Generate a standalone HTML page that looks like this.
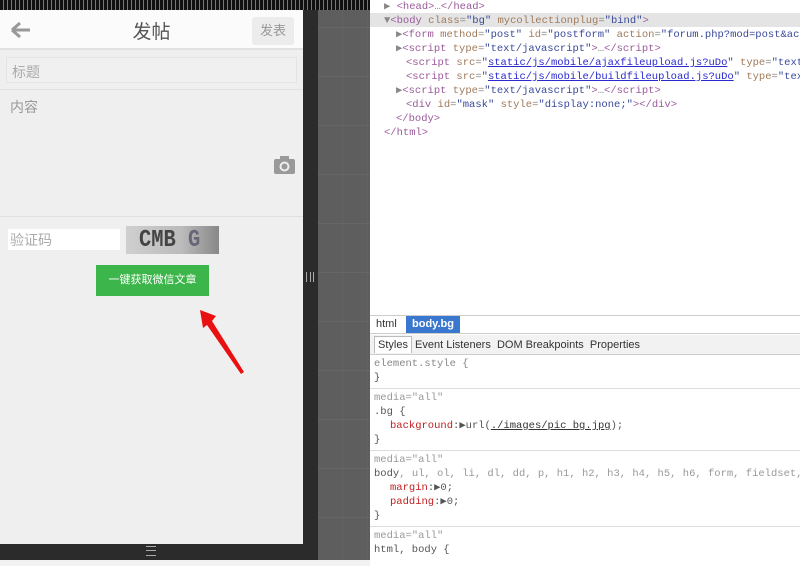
<!DOCTYPE html>
<html><head><meta charset="utf-8"><style>
*{margin:0;padding:0;box-sizing:border-box}
body{width:800px;height:566px;overflow:hidden;background:#fff;position:relative;font-family:"Liberation Sans","Noto Sans CJK SC",sans-serif}
.abs{position:absolute}
.mono{font-family:"Liberation Mono","DejaVu Sans Mono",monospace;font-size:10.5px;white-space:nowrap;color:#888}
.tag{color:#9a5a9a}.an{color:#a07a5a}.av{color:#3a4a9a}.lk{color:#2a2ad0;text-decoration:underline}
</style></head><body>
<div class="abs" style="left:0;top:0;width:370px;height:10px;background:repeating-linear-gradient(90deg,#111 0 3px,#777 3px 4px)"></div>
<div class="abs" style="left:318px;top:10px;width:52px;height:556px;background:#5e5e5e;background-image:repeating-linear-gradient(0deg,transparent 0 48px,#666 48px 49px),repeating-linear-gradient(90deg,transparent 0 24px,#626262 24px 25px)"></div>
<div class="abs" style="left:303px;top:10px;width:15px;height:550px;background:#2b2b2b"></div>
<div class="abs" style="left:0;top:544px;width:318px;height:16px;background:#2b2b2b"></div>
<div class="abs" style="left:146px;top:546px;width:10px;height:10px;border-top:1px solid #aaa;border-bottom:1px solid #aaa"><div style="margin-top:3px;border-top:1px solid #aaa"></div></div>
<div class="abs" style="left:306px;top:272px;width:8px;height:10px;border-left:1px solid #aaa;border-right:1px solid #aaa"><div style="margin-left:3px;width:1px;height:10px;background:#aaa"></div></div>
<div class="abs" style="left:0;top:560px;width:370px;height:6px;background:#f2f2f2"></div>
<div class="abs" style="left:0;top:10px;width:303px;height:534px;background:#efefef"></div>
<div class="abs" style="left:0;top:10px;width:303px;height:40px;background:#fbfbfb;border-bottom:2px solid #e2e2e2"></div>
<svg class="abs" style="left:9px;top:20px" width="24" height="20"><path d="M3 10H21M3 10L11 3M3 10L11 17" stroke="#999" stroke-width="3" fill="none"/></svg>
<div class="abs" style="left:0;top:17px;width:303px;text-align:center;font-size:19px;color:#555">发帖</div>
<div class="abs" style="left:252px;top:17px;width:42px;height:28px;background:#ececec;border-radius:3px;font-size:13px;color:#999;text-align:center;line-height:28px">发表</div>
<div class="abs" style="left:6px;top:57px;width:291px;height:26px;border:1px solid #e4e4e4;background:#f0f0f0;font-size:14px;color:#aaa;padding:4px 5px">标题</div>
<div class="abs" style="left:0;top:89px;width:303px;height:1px;background:#e2e2e2"></div>
<div class="abs" style="left:10px;top:97px;font-size:14px;color:#999">内容</div>
<svg class="abs" style="left:274px;top:156px" width="21" height="18"><rect x="0" y="3" width="21" height="15" rx="2" fill="#999"/><rect x="6" y="0" width="9" height="5" fill="#999"/><circle cx="10.5" cy="10.5" r="5" fill="#eee"/><circle cx="10.5" cy="10.5" r="3" fill="#999"/></svg>
<div class="abs" style="left:0;top:216px;width:303px;height:1px;background:#e0e0e0"></div>
<div class="abs" style="left:8px;top:229px;width:112px;height:21px;background:#fff;font-size:14px;color:#aaa;padding:1px 2px">验证码</div>
<div class="abs" style="left:126px;top:226px;width:93px;height:28px;background:linear-gradient(90deg,#cfcfcf,#bbb 60%,#888);overflow:hidden"><span style="position:absolute;left:13px;top:0;white-space:nowrap;font-family:'Liberation Mono',monospace;font-weight:bold;font-size:24px;color:#444;line-height:30px;transform:scaleX(0.85);transform-origin:left">CMB<span style="color:#667"> G</span></span></div>
<div class="abs" style="left:96px;top:265px;width:113px;height:31px;background:#3cb54a;color:#fff;font-size:11px;text-align:center;line-height:31px">一键获取微信文章</div>
<svg class="abs" style="left:190px;top:300px" width="60" height="80"><path d="M10 10L26 16L22 21L54 72L51 74L17 25L13 28Z" fill="#e81010"/></svg>
<div class="abs" style="left:370px;top:0;width:430px;height:316px;background:#fff"></div>
<div class="abs" style="left:370px;top:13px;width:430px;height:14px;background:#e4e4e4"></div>
<div class="abs mono" style="left:384px;top:0;line-height:14px">
<div>▶ <span class="tag">&lt;head&gt;</span>…<span class="tag">&lt;/head&gt;</span></div>
<div>▼<span class="tag">&lt;body</span> <span class="an">class</span>=<span class="av">"bg"</span> <span class="an">mycollectionplug</span>=<span class="av">"bind"</span><span class="tag">&gt;</span></div>
<div style="padding-left:12px">▶<span class="tag">&lt;form</span> <span class="an">method</span>=<span class="av">"post"</span> <span class="an">id</span>=<span class="av">"postform"</span> <span class="an">action</span>=<span class="av">"forum.php?mod=post&amp;ac</span></div>
<div style="padding-left:12px">▶<span class="tag">&lt;script</span> <span class="an">type</span>=<span class="av">"text/javascript"</span><span class="tag">&gt;</span>…<span class="tag">&lt;/script&gt;</span></div>
<div style="padding-left:22px"><span class="tag">&lt;script</span> <span class="an">src</span>=<span class="av">"<span class="lk">static/js/mobile/ajaxfileupload.js?uDo</span>"</span> <span class="an">type</span>=<span class="av">"text</span></div>
<div style="padding-left:22px"><span class="tag">&lt;script</span> <span class="an">src</span>=<span class="av">"<span class="lk">static/js/mobile/buildfileupload.js?uDo</span>"</span> <span class="an">type</span>=<span class="av">"tex</span></div>
<div style="padding-left:12px">▶<span class="tag">&lt;script</span> <span class="an">type</span>=<span class="av">"text/javascript"</span><span class="tag">&gt;</span>…<span class="tag">&lt;/script&gt;</span></div>
<div style="padding-left:22px"><span class="tag">&lt;div</span> <span class="an">id</span>=<span class="av">"mask"</span> <span class="an">style</span>=<span class="av">"display:none;"</span><span class="tag">&gt;&lt;/div&gt;</span></div>
<div style="padding-left:12px"><span class="tag">&lt;/body&gt;</span></div>
<div><span class="tag">&lt;/html&gt;</span></div>
</div>
<div class="abs" style="left:370px;top:315px;width:430px;height:19px;border-top:1px solid #ccc;border-bottom:1px solid #ccc;background:#fff;font-size:11px;color:#333"><span style="position:absolute;left:6px;top:2px">html</span><span style="position:absolute;left:36px;top:0;height:17px;width:54px;background:#3a78d0;color:#fff;font-weight:bold;padding:2px 6px">body.bg</span></div>
<div class="abs" style="left:370px;top:335px;width:430px;height:20px;background:#f2f2f2;border-bottom:1px solid #ccc;font-size:11px;color:#333;line-height:20px"><span style="border:1px solid #bbb;border-bottom:none;background:#fff;padding:2px 3px;margin-left:4px">Styles</span> Event Listeners &nbsp;DOM Breakpoints &nbsp;Properties</div>
<div class="abs mono" style="left:374px;top:357px;line-height:14px;color:#555">
<div style="color:#888">element.style {</div><div>}</div>
<div style="border-top:1px solid #ddd;margin:3px -4px 2px;"></div>
<div style="color:#999">media="all"</div><div>.bg {</div>
<div style="padding-left:16px"><span style="color:#c02020">background</span>:▶url(<span class="lk" style="color:#333">./images/pic bg.jpg</span>);</div><div>}</div>
<div style="border-top:1px solid #ddd;margin:3px -4px 2px;"></div>
<div style="color:#999">media="all"</div><div>body<span style="color:#999">, ul, ol, li, dl, dd, p, h1, h2, h3, h4, h5, h6, form, fieldset,</span></div>
<div style="padding-left:16px"><span style="color:#c02020">margin</span>:▶0;</div>
<div style="padding-left:16px"><span style="color:#c02020">padding</span>:▶0;</div><div>}</div>
<div style="border-top:1px solid #ddd;margin:3px -4px 2px;"></div>
<div style="color:#999">media="all"</div><div>html, body {</div>
</div>
</body></html>
